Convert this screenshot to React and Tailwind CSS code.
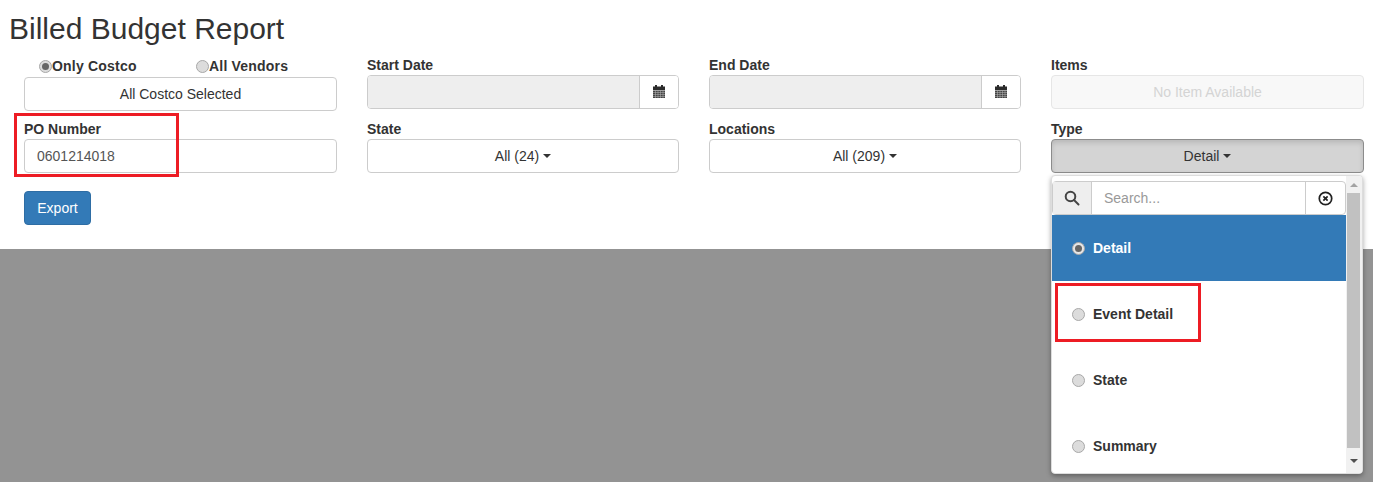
const FONT = { fontFamily: '"Liberation Sans", Arial, sans-serif' };

function Caret() {
  return <span className="inline-block ml-1 align-middle w-0 h-0 border-x-4 border-x-transparent border-t-4 border-t-[#333]" />;
}

function Label({ children }) {
  return <p className="h-[20px] text-sm leading-[20px] font-bold text-[#333]">{children}</p>;
}

function Radio({ checked, dark }) {
  return (
    <span className={`w-[13px] h-[13px] shrink-0 rounded-full border border-[#a8a8a8] flex items-center justify-center ${dark ? "bg-[#e6e6e6]" : "bg-[#dcdcdc]"}`}>
      {checked && <span className="w-[7px] h-[7px] rounded-full bg-[#666]" />}
    </span>
  );
}

function CalendarIcon() {
  return (
    <svg width="14" height="14" viewBox="0 0 14 14" fill="#2b2b2b">
      <rect x="3" y="0" width="2" height="3" />
      <rect x="9" y="0" width="2" height="3" />
      <rect x="1" y="1.5" width="12" height="3.5" />
      <path d="M1 5.500h12V13H1z" fill="#444" />
      <path d="M1 7.500h12M1 9.500h12M1 11.500h12M3.500 5.500V13M6 5.500V13M8.500 5.500V13M11 5.500V13" stroke="#bbb" strokeWidth="0.5" fill="none" />
    </svg>
  );
}

function DateField({ label }) {
  return (
    <div>
      <Label>{label}</Label>
      <div className="flex h-[34px] rounded border border-[#ccc] overflow-hidden">
        <div className="flex-1 bg-[#eee]" />
        <div className="w-[39px] flex items-center justify-center border-l border-[#ccc] bg-white">
          <CalendarIcon />
        </div>
      </div>
    </div>
  );
}

function SelectButton({ children, className = "border-[#ccc] bg-white" }) {
  return (
    <div className={`h-[34px] rounded border flex items-center justify-center text-sm text-[#333] ${className}`}>
      <span>{children}</span>
      <Caret />
    </div>
  );
}

function TypeOption({ name, active }) {
  return (
    <div className={`h-[66px] pl-[20px] flex items-center gap-[8px] text-sm font-bold ${active ? "bg-[#337ab7] text-white" : "text-[#333]"}`}>
      <Radio checked={active} dark={active} />
      <span>{name}</span>
    </div>
  );
}

function TypeDropdown() {
  return (
    <div className="absolute left-0 right-[1px] top-[36px] h-[299px] bg-white rounded border border-[#ddd] shadow-[0_2px_5px_rgba(0,0,0,0.35)] flex overflow-hidden">
      <div className="w-[294px] pt-[5px]">
        <div className="flex h-[34px] border border-[#ccc] rounded">
          <div className="w-[39px] bg-[#eee] border-r border-[#ccc] flex items-center justify-center">
            <svg width="16" height="16" viewBox="0 0 16 16" fill="none" stroke="#444" strokeWidth="2">
              <circle cx="6.500" cy="6.500" r="4.800" />
              <path d="M10 10l4.500 4.500" strokeLinecap="round" />
            </svg>
          </div>
          <div className="flex-1 pl-[12px] flex items-center text-sm text-[#999]">Search...</div>
          <div className="w-[40px] border-l border-[#ccc] flex items-center justify-center">
            <svg width="15" height="15" viewBox="0 0 14 14" fill="none" stroke="#222" strokeWidth="1.600">
              <circle cx="7" cy="7" r="5.800" />
              <path d="M5 5l4 4M9 5l-4 4" />
            </svg>
          </div>
        </div>
        <TypeOption name="Detail" active />
        <TypeOption name="Event Detail" />
        <TypeOption name="State" />
        <TypeOption name="Summary" />
      </div>
      <div className="flex-1 bg-[#f1f1f1] flex flex-col">
        <div className="h-[17px] flex items-center justify-center">
          <span className="w-0 h-0 border-x-[4px] border-x-transparent border-b-[4px] border-b-[#a3a3a3]" />
        </div>
        <div className="ml-[1px] w-[13px] h-[255px] bg-[#c1c1c1]" />
        <div className="flex-1 flex items-center justify-center">
          <span className="w-0 h-0 border-x-[4px] border-x-transparent border-t-[4px] border-t-[#505050]" />
        </div>
      </div>
    </div>
  );
}

export default function App() {
  return (
    <div className="relative h-[482px] flex flex-col overflow-hidden bg-white" style={FONT}>
      <div className="h-[249px] shrink-0">
        <h2 className="pl-[9px] pt-[12px] h-[55px] text-[30px] leading-[33px] font-normal text-[#333]">Billed Budget Report</h2>

        <div className="pl-[24px] grid grid-cols-[313px_312px_312px_313px] gap-x-[30px] gap-y-[8px]">
          <div>
            <div className="h-[22px] flex text-sm font-bold text-[#333] tracking-[0.2px]">
              <label className="ml-[15px] w-[157px] flex items-center"><Radio checked /><span>Only Costco</span></label>
              <label className="flex items-center"><Radio /><span>All Vendors</span></label>
            </div>
            <div className="h-[34px] rounded border border-[#ccc] flex items-center justify-center text-sm text-[#333]">All Costco Selected</div>
          </div>
          <DateField label="Start Date" />
          <DateField label="End Date" />
          <div>
            <Label>Items</Label>
            <div className="h-[34px] rounded border border-[#e6e6e6] bg-[#f8f8f8] flex items-center justify-center text-sm text-[#d4d4d4]">No Item Available</div>
          </div>

          <div>
            <Label>PO Number</Label>
            <div className="h-[34px] rounded border border-[#ccc] px-[12px] flex items-center text-sm text-[#555]">0601214018</div>
          </div>
          <div>
            <Label>State</Label>
            <SelectButton>All (24)</SelectButton>
          </div>
          <div>
            <Label>Locations</Label>
            <SelectButton>All (209)</SelectButton>
          </div>
          <div className="relative z-10">
            <Label>Type</Label>
            <div className="relative">
              <SelectButton className="border-[#8c8c8c] bg-[#d4d4d4] shadow-[inset_0_3px_5px_rgba(0,0,0,0.125)]">Detail</SelectButton>
              <TypeDropdown />
            </div>
          </div>
        </div>

        <button className="ml-[24px] mt-[18px] h-[34px] w-[67px] rounded border border-[#2e6da4] bg-[#337ab7] text-sm text-white">Export</button>
      </div>

      <div className="flex-1 bg-[#939393]" />

      {/* red annotation boxes */}
      <div className="absolute left-[14px] top-[113px] w-[165px] h-[64px] border-[3px] border-[#ed1c24]" />
      <div className="absolute z-20 left-[1055px] top-[283px] w-[146px] h-[59px] border-[3px] border-[#ed1c24]" />
    </div>
  );
}
